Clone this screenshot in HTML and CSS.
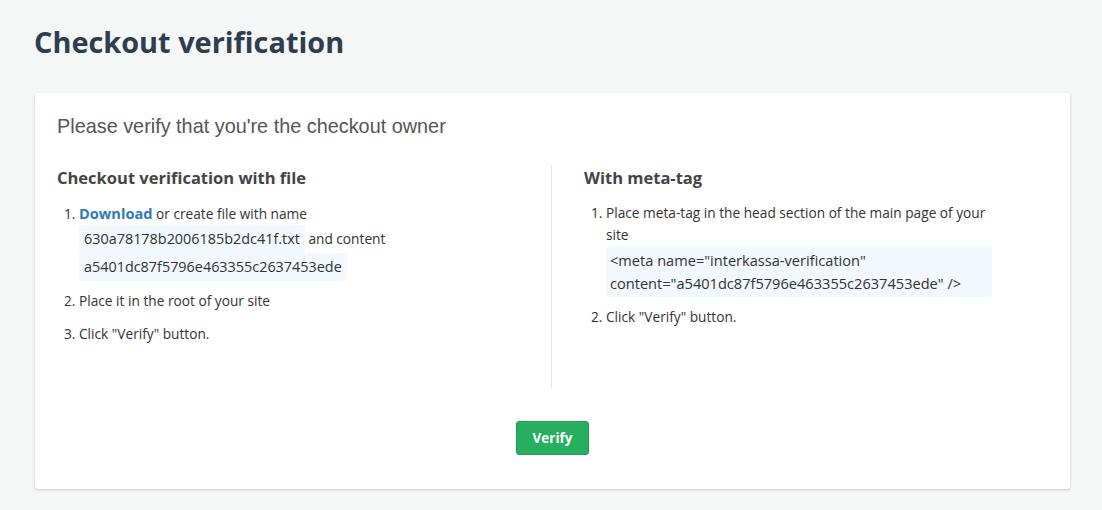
FILE: index.html
```html
<!DOCTYPE html>
<html>
<head>
<meta charset="utf-8">
<link rel="stylesheet" href="styles.css">
</head>
<body>
<div class="page">
  <h1 class="page-title">Checkout verification</h1>
  <div class="card">
    <h2 class="card-title">Please verify that you're the checkout owner</h2>
    <div class="cols">
      <div class="col col-left">
        <h3 class="sec-title">Checkout verification with file</h3>
        <ol class="steps">
          <li class="step-file"><a class="dl" href="#">Download</a> or create file with name <code class="code">630a78178b2006185b2dc41f.txt</code> and content <code class="code">a5401dc87f5796e463355c2637453ede</code></li>
          <li>Place it in the root of your site</li>
          <li>Click "Verify" button.</li>
        </ol>
      </div>
      <div class="col col-right">
        <h3 class="sec-title">With meta-tag</h3>
        <ol class="steps">
          <li>Place meta-tag in the head section of the main page of your site
            <div class="meta-box">&lt;meta name="interkassa-verification" content="a5401dc87f5796e463355c2637453ede" /&gt;</div>
          </li>
          <li>Click "Verify" button.</li>
        </ol>
      </div>
    </div>
    <div class="actions">
      <button class="btn">Verify</button>
    </div>
  </div>
</div>
</body>
</html>
```
FILE: styles.css
```css
html, body {
  margin: 0;
  padding: 0;
  background: #f5f6f6;
}
body {
  font-family: "Open Sans", "Noto Sans", sans-serif;
  color: #333;
  font-size: 13.7px;
}
.page {
  padding: 19px 32px 21px 35px;
}
.page-title {
  margin: 0 0 28px -1px;
  font-size: 28.9px;
  line-height: 46px;
  font-weight: 700;
  color: #2c3e50;
}
.card {
  background: #fff;
  border-radius: 3px;
  box-shadow: 0 1px 3px rgba(0,0,0,0.18);
  padding: 21px 22px 34px 22px;
}
.card-title {
  margin: 0 0 27px 0;
  font-family: "Liberation Sans", Arial, sans-serif;
  font-weight: 400;
  font-size: 19.85px;
  line-height: 24px;
  color: #555;
}
.cols {
  display: grid;
  grid-template-columns: 495px 1fr;
}
.col {
  min-height: 223px;
}
.col-left {
  border-right: 1px solid #e3e3e3;
  padding-right: 32px;
}
.col-right {
  padding-left: 32px;
  padding-right: 56px;
}
.sec-title {
  margin: 0 0 11px 0;
  font-size: 16.5px;
  line-height: 26px;
  font-weight: 700;
  color: #444;
}
.steps {
  margin: 0;
  padding-left: 22px;
}
.steps li {
  line-height: 22px;
  margin-bottom: 11px;
}
.steps li.step-file {
  margin-bottom: 9px;
}
.dl {
  color: #2e7bb6;
  font-weight: 700;
  font-size: 14.6px;
  text-decoration: none;
}
.code {
  font-family: "Open Sans", "Noto Sans", sans-serif;
  font-size: 14.4px;
  display: inline-block;
  line-height: 20px;
  padding: 4px 5px;
  background: #f2f8fd;
  border-radius: 3px;
  color: #333;
}
.meta-box {
  font-size: 14.6px;
  line-height: 23px;
  padding: 2.5px 4px;
  margin-bottom: -2px;
  background: #f2f8fd;
  border-radius: 3px;
}
.actions {
  display: flex;
  justify-content: center;
  margin-top: 33px;
}
.btn {
  font-family: "Open Sans", "Noto Sans", sans-serif;
  font-size: 13.5px;
  font-weight: 700;
  color: #fff;
  background: #27ae60;
  border: 1px solid #229b55;
  border-radius: 3px;
  width: 73px;
  height: 34px;
  padding: 0;
}
```
